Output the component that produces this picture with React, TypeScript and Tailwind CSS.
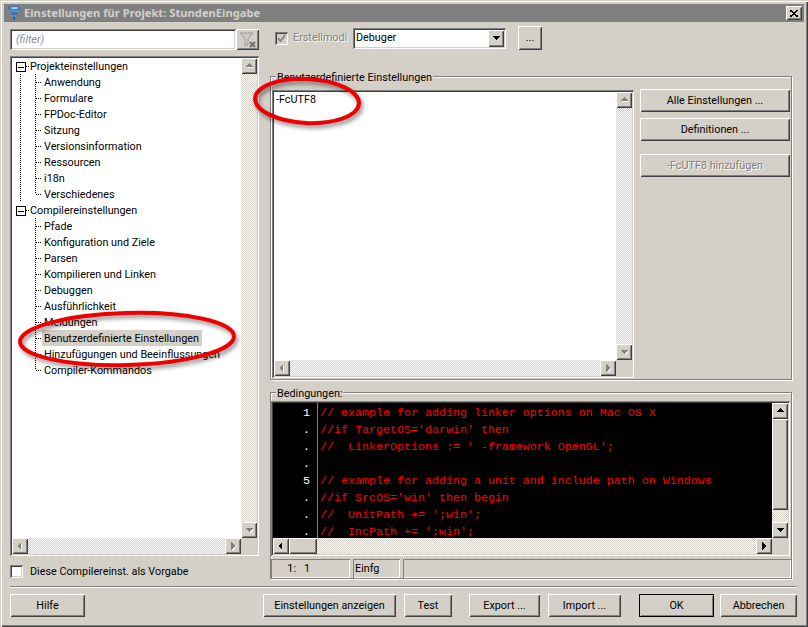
import React from "react";

const raised = "shadow-[inset_1px_1px_0_#fff,inset_-1px_-1px_0_#404040,inset_2px_2px_0_#d4d0c8,inset_-2px_-2px_0_#808080]";
const sunken = "shadow-[inset_1px_1px_0_#808080,inset_-1px_-1px_0_#fff,inset_2px_2px_0_#404040,inset_-2px_-2px_0_#d4d0c8]";
const dither = "bg-[repeating-conic-gradient(#d4d0c8_0_25%,#ffffff_0_50%)] bg-[length:2px_2px]";

function Arrow({ dir, on }: { dir: "u" | "d" | "l" | "r"; on?: boolean }) {
  const pts = { u: "4,1 0,5 8,5", d: "0,2 8,2 4,6", l: "5,0 5,8 1,4", r: "2,0 2,8 6,4" }[dir];
  return (
    <svg width="8" height="8" viewBox="0 0 8 8" shapeRendering="crispEdges">
      {!on && <polygon points={pts} fill="#fff" transform="translate(1 1)" />}
      <polygon points={pts} fill={on ? "#000" : "#808080"} />
    </svg>
  );
}

function SB({ dir, on }: { dir: "u" | "d" | "l" | "r"; on?: boolean }) {
  return (
    <div className={`w-4 h-4 shrink-0 flex items-center justify-center bg-[#d4d0c8] ${raised}`}>
      <Arrow dir={dir} on={on} />
    </div>
  );
}

function VBar({ on, thumb }: { on?: boolean; thumb?: number }) {
  return (
    <div className={`flex flex-col h-full w-4 ${dither}`}>
      <SB dir="u" on={on} />
      {thumb ? <div className={`w-4 bg-[#d4d0c8] ${raised}`} style={{ height: thumb }} /> : null}
      <div className="flex-1" />
      <SB dir="d" on={on} />
    </div>
  );
}

function HBar({ on, thumb }: { on?: boolean; thumb?: number }) {
  return (
    <div className={`flex w-full h-4 ${dither}`}>
      <SB dir="l" on={on} />
      {thumb ? <div className={`h-4 bg-[#d4d0c8] ${raised}`} style={{ width: thumb }} /> : null}
      <div className="flex-1" />
      <SB dir="r" on={on} />
    </div>
  );
}

function Btn({ w, children, className = "", disabled }: { w: number; children: React.ReactNode; className?: string; disabled?: boolean }) {
  return (
    <div
      className={`h-[23px] shrink-0 pt-px flex items-center justify-center bg-[#d4d0c8] ${raised} ${disabled ? "text-[#808080] [text-shadow:1px_1px_0_#fff]" : ""} ${className}`}
      style={{ width: w }}
    >
      {children}
    </div>
  );
}

function Connector({ more, last }: { more?: boolean; last?: boolean }) {
  return (
    <svg width="30" height="16" className="shrink-0" shapeRendering="crispEdges">
      {more && <path d="M6.5 0V16" stroke="#000" strokeDasharray="1 1" fill="none" />}
      <path d={last ? "M21.5 0V8" : "M21.5 0V16"} stroke="#000" strokeDasharray="1 1" fill="none" />
      <path d="M22 8.5H28" stroke="#000" strokeDasharray="1 1" fill="none" />
    </svg>
  );
}

function RootRow({ label }: { label: string }) {
  return (
    <div className="flex items-center h-4 pl-[2px] whitespace-nowrap">
      <svg width="14" height="16" className="shrink-0" shapeRendering="crispEdges">
        <rect x="0.5" y="4.5" width="9" height="9" fill="#fff" stroke="#000" />
        <path d="M2 9H8" stroke="#000" strokeWidth="1" />
        <path d="M10 8.5H13" stroke="#000" strokeDasharray="1 1" />
      </svg>
      <span className="h-4 leading-[18px]">{label}</span>
    </div>
  );
}

function ChildRow({ label, more, last, selected }: { label: string; more?: boolean; last?: boolean; selected?: boolean }) {
  return (
    <div className="flex items-center h-4 whitespace-nowrap">
      <Connector more={more} last={last} />
      <span className={`pr-[3px] h-4 leading-[18px] ${selected ? "bg-[#d4d0c8] -ml-[2px] pl-[2px]" : ""}`}>{label}</span>
    </div>
  );
}

function Group({ label, className, children }: { label: string; className: string; children: React.ReactNode }) {
  return (
    <div className={`border border-[#808080] shadow-[inset_1px_1px_0_#fff,1px_1px_0_#fff] ${className}`}>
      <div className="w-fit -mt-[7px] ml-[5px] px-px h-[14px] leading-[16px] bg-[#d4d0c8]">{label}</div>
      {children}
    </div>
  );
}

const group1 = ["Anwendung", "Formulare", "FPDoc-Editor", "Sitzung", "Versionsinformation", "Ressourcen", "i18n", "Verschiedenes"];
const group2 = ["Pfade", "Konfiguration und Ziele", "Parsen", "Kompilieren und Linken", "Debuggen", "Ausführlichkeit", "Meldungen", "Benutzerdefinierte Einstellungen", "Hinzufügungen und Beeinflussungen", "Compiler-Kommandos"];

const code = [
  "// example for adding linker options on Mac OS X",
  "//if TargetOS='darwin' then",
  "//  LinkerOptions := ' -framework OpenGL';",
  "",
  "// example for adding a unit and include path on Windows",
  "//if SrcOS='win' then begin",
  "//  UnitPath += ';win';",
  "//  IncPath += ';win';",
];
const gutter = ["1", ".", ".", ".", "5", ".", ".", "."];

export default function App() {
  return (
    <div className="relative w-[808px] h-[627px] overflow-hidden bg-[#d4d0c8] text-black text-[10.8px] font-['Roboto','Noto_Sans',sans-serif] shadow-[inset_1px_1px_0_#d4d0c8,inset_2px_2px_0_#fff,inset_-1px_-1px_0_#404040,inset_-2px_-2px_0_#808080] pt-1 flex flex-col">
      {/* title bar */}
      <div className="mx-1 h-[18px] shrink-0 bg-[#808080] flex items-center pl-[3px] pr-[2px]">
        <svg width="15" height="16" viewBox="0 0 15 16" className="shrink-0">
          <ellipse cx="7.5" cy="3" rx="6.5" ry="2" fill="#2f6fb8" />
          <ellipse cx="7.5" cy="3" rx="4" ry="1" fill="#a9d3f2" />
          <ellipse cx="7" cy="6" rx="5" ry="1.6" fill="#4c93d6" />
          <ellipse cx="7.5" cy="8.6" rx="3.6" ry="1.3" fill="#2f6fb8" />
          <ellipse cx="7" cy="11" rx="2.4" ry="1" fill="#4c93d6" />
          <path d="M6 12L8 12L8 15L7 15.5Z" fill="#1f4f94" />
        </svg>
        <span className="ml-[2px] font-bold text-[11.2px] text-[#d4d0c8] flex-1 font-['Noto_Sans',sans-serif]">Einstellungen für Projekt: StundenEingabe</span>
        <div className={`w-4 h-[14px] flex items-center justify-center bg-[#d4d0c8] ${raised}`}>
          <svg width="8" height="7" shapeRendering="crispEdges"><path d="M0 0L8 7M8 0L0 7" stroke="#000" strokeWidth="1.6" /></svg>
        </div>
      </div>

      {/* body */}
      <div className="flex h-[564px] shrink-0">
        {/* left */}
        <div className="ml-[10px] w-[249px] pt-[7px] flex flex-col">
          <div className="flex h-[21px] items-stretch">
            <div className={`w-[226px] bg-white pl-[6px] pt-px flex items-center italic text-[#8a8a9a] ${sunken}`}>(filter)</div>
            <div className={`w-[23px] flex items-center justify-center bg-[#d4d0c8] ${raised}`}>
              <svg width="18" height="16" viewBox="0 0 18 16">
                <path d="M1 1H14L9 7V13L6 14V7Z" fill="#c8c8c8" stroke="#9a9a9a" />
                <path d="M11 10L16 15M16 10L11 15" stroke="#707070" strokeWidth="2" />
              </svg>
            </div>
          </div>
          <div className={`mt-[6px] h-[500px] bg-white p-[2px] grid grid-cols-[1fr_16px] grid-rows-[1fr_16px] ${sunken}`}>
            <div className="bg-white pl-[2px] overflow-hidden">
              <RootRow label="Projekteinstellungen" />
              {group1.map((l, i) => (
                <ChildRow key={l} label={l} more last={i === group1.length - 1} />
              ))}
              <RootRow label="Compilereinstellungen" />
              {group2.map((l, i) => (
                <ChildRow key={l} label={l} last={i === group2.length - 1} selected={l.startsWith("Benutzer")} />
              ))}
            </div>
            <VBar />
            <HBar />
            <div className="bg-[#d4d0c8]" />
          </div>
          <div className="mt-[9px] flex items-center h-[13px]">
            <div className={`w-[13px] h-[13px] bg-white ${sunken}`} />
            <span className="ml-[7px] pt-px">Diese Compilereinst. als Vorgabe</span>
          </div>
        </div>

        {/* right */}
        <div className="ml-[11px] w-[522px] flex flex-col">
          <div className="flex items-center h-6 mt-[4px] pl-[5px]">
            <div className={`w-[13px] h-[13px] bg-[#d4d0c8] flex items-center justify-center ${sunken}`}>
              <svg width="9" height="9" viewBox="0 0 9 9"><path d="M1 4L3.5 7L8 1" fill="none" stroke="#808080" strokeWidth="1.8" /></svg>
            </div>
            <span className="ml-[5px] pt-px w-[50px] whitespace-nowrap text-[#808080] [text-shadow:1px_1px_0_#fff]">Erstellmodi</span>
            <div className={`ml-[10px] w-[153px] h-[21px] bg-white flex items-center justify-between pl-[3px] pr-[2px] ${sunken}`}>
              <span className="pt-px">Debuger</span>
              <div className={`w-4 h-[17px] bg-[#d4d0c8] flex items-center justify-center ${raised}`}><Arrow dir="d" on /></div>
            </div>
            <div className={`ml-[12px] w-6 h-6 bg-[#d4d0c8] flex items-center justify-center ${raised}`}>...</div>
          </div>

          <Group label="Benutzerdefinierte Einstellungen" className="mt-[26px] h-[304px] w-[522px]">
            <div className="flex pl-[1px] pt-[6px]">
              <div className={`w-[362px] h-[288px] bg-white p-[2px] grid grid-cols-[1fr_16px] grid-rows-[1fr_16px] ${sunken}`}>
                <div className="pl-[2px] leading-[16px]">-FcUTF8</div>
                <VBar />
                <HBar />
                <div className="bg-[#d4d0c8]" />
              </div>
              <div className="ml-[6px] -mt-px w-[150px] flex flex-col">
                <Btn w={150}>Alle Einstellungen ...</Btn>
                <Btn w={150} className="mt-[6px]">Definitionen ...</Btn>
                <Btn w={150} className="mt-[13px]" disabled>-FcUTF8 hinzufügen</Btn>
              </div>
            </div>
          </Group>

          <Group label="Bedingungen:" className="mt-[12px] h-[187px] w-[522px]">
            <div className={`mt-px w-[519px] h-[155px] bg-[#d4d0c8] p-[2px] grid grid-cols-[1fr_16px] grid-rows-[1fr_16px] ${sunken}`}>
              <div className="bg-black flex overflow-hidden font-['Liberation_Mono',monospace] text-[11.67px] leading-[17px]">
                <div className="w-[44px] shrink-0 pr-[7px] pt-[2px] text-right text-white">
                  {gutter.map((g, i) => <div key={i} className="h-[17px]">{g}</div>)}
                </div>
                <div className="w-px bg-[#808080] shrink-0" />
                <div className="pl-[2px] pt-[2px] text-[#ff0000] whitespace-pre">
                  {code.map((c, i) => <div key={i} className="h-[17px]">{c}</div>)}
                </div>
              </div>
              <VBar on thumb={91} />
              <HBar on thumb={28} />
              <div className="bg-[#d4d0c8]" />
            </div>
            <div className="flex mt-[3px] gap-[3px] h-[19px]">
              <div className="w-[79px] pt-px border-t border-l border-[#808080] shadow-[inset_-1px_-1px_0_#fff] flex items-center pl-[10px] whitespace-pre">  1:   1</div>
              <div className="w-[47px] pt-px border-t border-l border-[#808080] shadow-[inset_-1px_-1px_0_#fff] flex items-center pl-px">Einfg</div>
              <div className="flex-1 border-t border-l border-[#808080] shadow-[inset_-1px_-1px_0_#fff]" />
            </div>
          </Group>
        </div>
      </div>

      {/* separator */}
      <div className="ml-[10px] w-[787px] h-[2px] border-t border-[#808080] bg-white shrink-0" />

      {/* footer */}
      <div className="flex pl-[10px] mt-[6px]">
        <Btn w={75}>Hilfe</Btn>
        <Btn w={133} className="ml-[178px]">Einstellungen anzeigen</Btn>
        <Btn w={48} className="ml-[8px]">Test</Btn>
        <Btn w={71} className="ml-[17px]">Export ...</Btn>
        <Btn w={73} className="ml-[8px]">Import ...</Btn>
        <Btn w={75} className="ml-[18px] outline outline-1 -outline-offset-1 outline-black">OK</Btn>
        <Btn w={77} className="ml-[6px]">Abbrechen</Btn>
      </div>

      {/* hand-drawn annotations */}
      <svg width="808" height="627" className="absolute inset-0 pointer-events-none [filter:drop-shadow(2px_3px_2px_rgba(0,0,0,0.45))]">
        <ellipse cx="307" cy="101" rx="52" ry="22" transform="rotate(3 307 101)" fill="none" stroke="#ee0000" strokeWidth="4" />
        <ellipse cx="127" cy="339" rx="107" ry="26" transform="rotate(-1.5 127 339)" fill="none" stroke="#ee0000" strokeWidth="4" />
      </svg>
    </div>
  );
}
